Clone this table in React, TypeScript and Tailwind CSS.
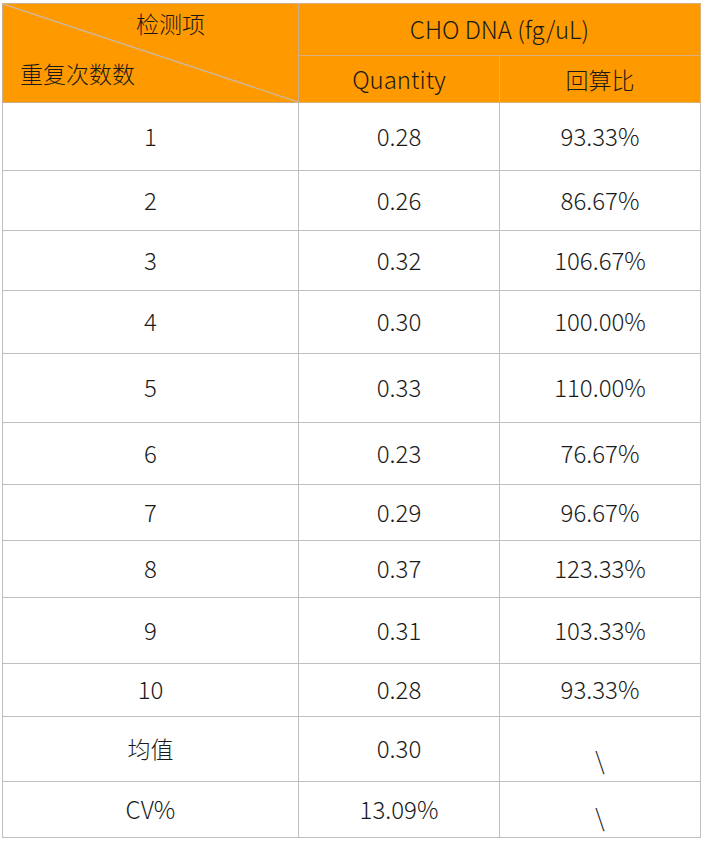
import React from "react";

const rows: [string, string, string, number][] = [
  ["1", "0.28", "93.33%", 68],
  ["2", "0.26", "86.67%", 60],
  ["3", "0.32", "106.67%", 60],
  ["4", "0.30", "100.00%", 63],
  ["5", "0.33", "110.00%", 69],
  ["6", "0.23", "76.67%", 62],
  ["7", "0.29", "96.67%", 56],
  ["8", "0.37", "123.33%", 57],
  ["9", "0.31", "103.33%", 66],
  ["10", "0.28", "93.33%", 53],
];

export default function App() {
  const font = { fontFamily: '"Noto Sans CJK SC", "Noto Sans", sans-serif' };
  return (
    <div className="bg-white w-[702px] h-[841px] pt-[3px] pl-[2px]" style={font}>
      <table className="border-collapse w-[698px] table-fixed text-[24px] leading-none font-light text-[#1a1a1a] text-center">
        <colgroup>
          <col className="w-[296px]" />
          <col className="w-[201px]" />
          <col className="w-[201px]" />
        </colgroup>
        <thead>
          <tr className="h-[52px] bg-[#ff9900]">
            <td rowSpan={2} className="relative border border-[#c9b08c] p-0 align-top text-[23px]">
              <svg className="absolute inset-0 w-full h-full" preserveAspectRatio="none" viewBox="0 0 100 100">
                <line x1="0" y1="0" x2="100" y2="100" stroke="#cdb89a" strokeWidth="1.4" vectorEffect="non-scaling-stroke" />
              </svg>
              <div className="relative flex flex-col h-full">
                <div className="pl-[40px] pt-[8px] text-center w-full">检测项</div>
                <div className="text-left pl-[17px] pt-[27px]">重复次数数</div>
              </div>
            </td>
            <td colSpan={2} className="border border-[#d9b07e] p-0 pb-[2px]">CHO DNA (fg/uL)</td>
          </tr>
          <tr className="h-[47px] bg-[#ff9900]">
            <td className="border border-[#d9b07e] p-0">Quantity</td>
            <td className="border border-[#d9b07e] p-0 text-[23px]">回算比</td>
          </tr>
        </thead>
        <tbody>
          {rows.map(([a, b, c, h]) => (
            <tr key={a} style={{ height: h }}>
              <td className="border border-[#bfbfbf] p-0 pb-[2px]">{a}</td>
              <td className="border border-[#bfbfbf] p-0 pb-[2px]">{b}</td>
              <td className="border border-[#bfbfbf] p-0 pb-[2px]">{c}</td>
            </tr>
          ))}
          <tr className="h-[65px]">
            <td className="border border-[#bfbfbf] p-0 pb-[2px] text-[23px]">均值</td>
            <td className="border border-[#bfbfbf] p-0 pb-[2px]">0.30</td>
            <td className="border border-[#bfbfbf] p-0 pt-[22px]">\</td>
          </tr>
          <tr className="h-[56px]">
            <td className="border border-[#bfbfbf] p-0 pb-[2px]">CV%</td>
            <td className="border border-[#bfbfbf] p-0 pb-[2px]">13.09%</td>
            <td className="border border-[#bfbfbf] p-0 pt-[14px]">\</td>
          </tr>
        </tbody>
      </table>
    </div>
  );
}
